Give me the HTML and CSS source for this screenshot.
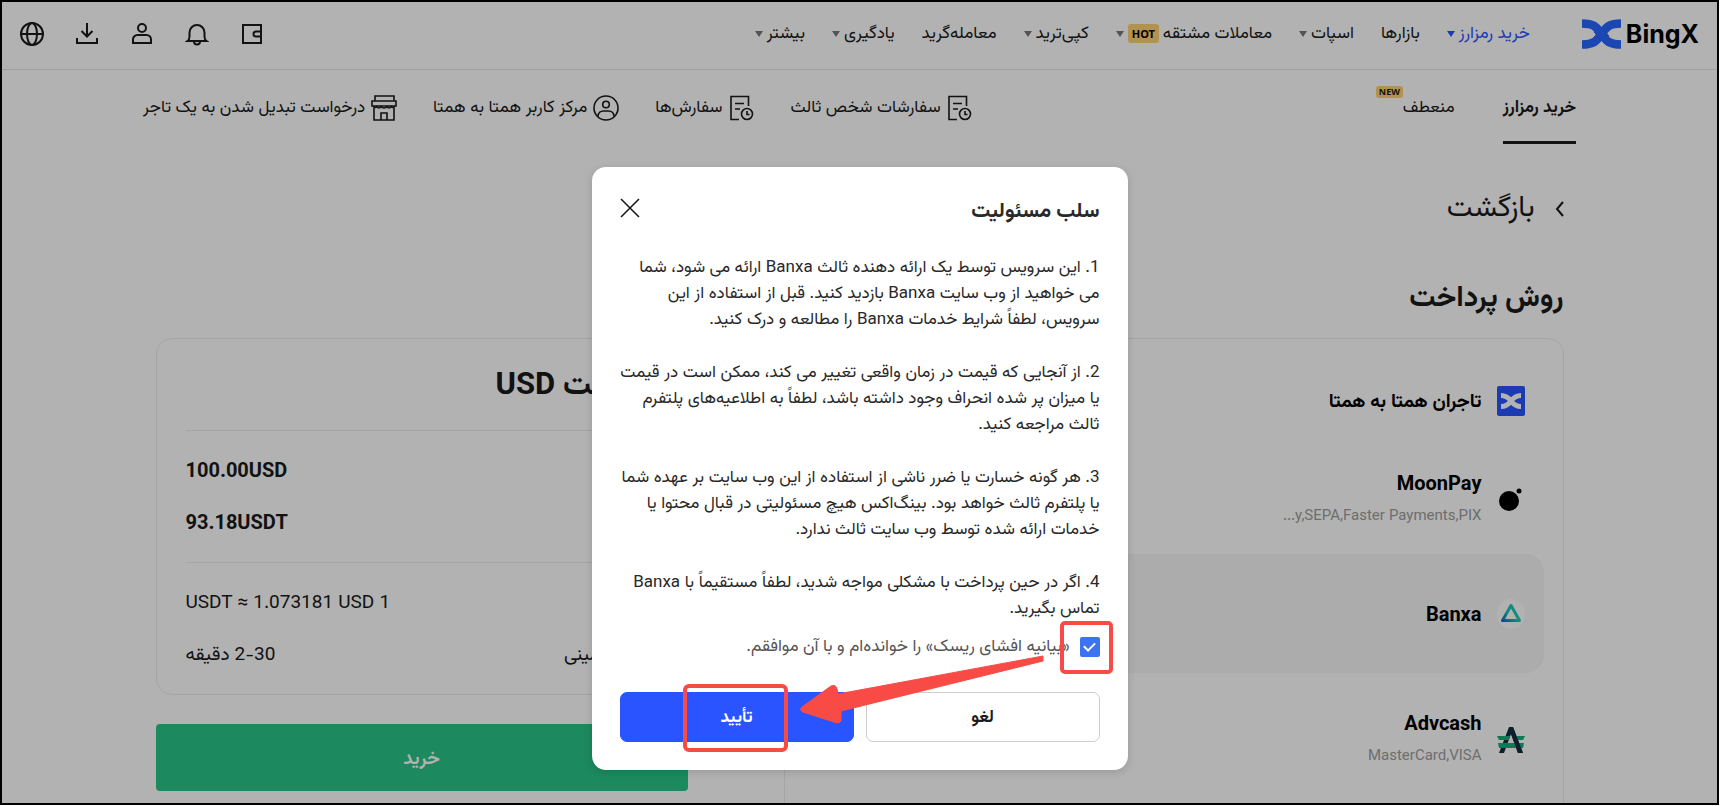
FILE: index.html
```
<!DOCTYPE html>
<html lang="fa" dir="rtl">
<head>
<meta charset="utf-8">
<title>BingX</title>
<link rel="stylesheet" href="styles.css">
</head>
<body>
<div class="frame">

<header class="header">
  <a class="logo" href="#">
    <svg width="39" height="30" viewBox="0 0 39 30">
      <path d="M39 4.500C25 4.500 23.500 10 19.500 15S14 25.500 0 25.500" fill="none" stroke="#2866ff" stroke-width="8.500"/>
      <path d="M15 10l9 10" stroke="#2254d8" stroke-width="9"/>
      <path d="M0 4.500C14 4.500 15.500 10 19.500 15S25 25.500 39 25.500" fill="none" stroke="#2866ff" stroke-width="8.500"/>
    </svg>
    <span class="logo-text">BingX</span>
  </a>
  <nav class="nav">
    <a class="nav-item active" href="#">خرید رمزارز<i class="caret"></i></a>
    <a class="nav-item" href="#">بازارها</a>
    <a class="nav-item" href="#">اسپات<i class="caret"></i></a>
    <a class="nav-item" href="#">معاملات مشتقه<span class="hot">HOT</span><i class="caret"></i></a>
    <a class="nav-item" href="#">کپی‌ترید<i class="caret"></i></a>
    <a class="nav-item" href="#">معامله‌گرید</a>
    <a class="nav-item" href="#">یادگیری<i class="caret"></i></a>
    <a class="nav-item" href="#">بیشتر<i class="caret"></i></a>
  </nav>
  <div class="tools">
    <button class="tool" aria-label="کیف پول"><svg class="icon" viewBox="0 0 24 24"><path d="M3 3h18v18H3zM21 9.500h-5a2.500 2.500 0 0 0 0 5h5"/></svg></button>
    <button class="tool" aria-label="اعلان‌ها"><svg class="icon" viewBox="0 0 24 24"><path d="M2.500 19c1.500-1 2-2.500 2-4.500V10.500a7.500 7.500 0 0 1 15 0V14.500c0 2 .5 3.500 2 4.500zM9 19.500a3 3 0 0 0 6 0"/></svg></button>
    <button class="tool" aria-label="حساب"><svg class="icon" viewBox="0 0 24 24"><circle cx="12" cy="6" r="4"/><path d="M3 21v-3.500a4.500 4.500 0 0 1 4.500-4.500h9a4.500 4.500 0 0 1 4.500 4.500V21z"/></svg></button>
    <button class="tool" aria-label="دانلود"><svg class="icon" viewBox="0 0 24 24"><path d="M12 1v13M6.500 9l5.500 5.500L17.500 9M2 16v5h20v-5"/></svg></button>
    <button class="tool" aria-label="زبان"><svg class="icon" viewBox="0 0 24 24"><circle cx="12" cy="12" r="11"/><ellipse cx="12" cy="12" rx="5" ry="11"/><path d="M1 12h22"/></svg></button>
  </div>
</header>

<div class="subnav">
  <div class="tabs">
    <a class="tab current" href="#">خرید رمزارز</a>
    <a class="tab" href="#">منعطف<span class="new">NEW</span></a>
  </div>
  <div class="links">
    <a class="link" href="#"><svg class="icon thin" viewBox="0 0 26 26"><path d="M19.500 11V1.500H2v23h8M6 8.500h9M6 14h5"/><circle cx="18" cy="19" r="5.500"/><path d="M18 16v3.500h2.500"/></svg>سفارشات شخص ثالث</a>
    <a class="link" href="#"><svg class="icon thin" viewBox="0 0 26 26"><path d="M19.500 11V1.500H2v23h8M6 8.500h9M6 14h5"/><circle cx="18" cy="19" r="5.500"/><path d="M18 16v3.500h2.500"/></svg>سفارش‌ها</a>
    <a class="link" href="#"><svg class="icon thin" viewBox="0 0 26 26"><circle cx="13" cy="13" r="12"/><circle cx="13" cy="9.500" r="3.300"/><path d="M5 21.500c0-3.500 2.500-5.500 5.500-5.500h5c3 0 5.500 2 5.500 5.500"/></svg>مرکز کاربر همتا به همتا</a>
    <a class="link" href="#"><svg class="icon thin" viewBox="0 0 26 26"><path d="M4 6V1h19v5M1 6h24v5H1zM3 13v12h20V13M10 25v-7h6v7"/><path d="M2 11c1 2 3 2 4 .5 1 2 3 2 4 0 1 2 5 2 6 0 1 2 3 2 4 0 1 1.500 3 1.500 4-.5"/></svg>درخواست تبدیل شدن به یک تاجر</a>
  </div>
</div>

<main class="main">
  <a class="back" href="#"><svg class="icon" width="9" height="16" viewBox="0 0 9 16"><path d="M8 1L2 8l6 7"/></svg>بازگشت</a>
  <h1 class="title">روش پرداخت</h1>
  <div class="columns">
    <section class="methods">
      <div class="method merchants">
        <svg width="28" height="30" viewBox="0 0 28 30"><rect width="28" height="30" rx="2" fill="#2954ff"/><path d="M4 9.500c6 0 8 3 10 5.500s4 5.500 10 5.500M24 9.500c-6 0-8 3-10 5.500s-4 5.500-10 5.500" fill="none" stroke="#fff" stroke-width="5"/></svg>
        <div class="method-name">تاجران همتا به همتا</div>
      </div>
      <div class="method">
        <svg width="28" height="30" viewBox="0 0 28 30"><circle cx="12" cy="15" r="10"/><circle cx="22" cy="5" r="2.500"/></svg>
        <div><div class="method-name">MoonPay</div><div class="method-info">y,SEPA,Faster Payments,PIX...</div></div>
      </div>
      <div class="method selected">
        <svg width="28" height="30" viewBox="0 0 28 30">
          <defs><linearGradient id="banxa" x1="0" y1="1" x2="1" y2="0"><stop offset="0" stop-color="#0a6fd0"/><stop offset=".45" stop-color="#19c9bc"/><stop offset="1" stop-color="#19c9a8"/></linearGradient></defs>
          <ellipse cx="14" cy="15" rx="14" ry="15" fill="#fff"/>
          <path d="M14 6.500L22.500 21.500h-17z" fill="none" stroke="url(#banxa)" stroke-width="3" stroke-linejoin="round"/>
        </svg>
        <div class="method-name">Banxa</div>
      </div>
      <div class="method last">
        <svg width="28" height="30" viewBox="0 0 28 30"><path d="M12 1h4l10 26h-5L14 8 7 27H2z" fill="#0f2f40"/><path d="M0 10h13l-1 4H2zM16 10h12l-2 4h-8zM1 17h26l-1 5H2z" fill="#12b07a"/><path d="M14 8l7 19h5L16 1h-3z" fill="#0f2f40"/></svg>
        <div><div class="method-name">Advcash</div><div class="method-info">MasterCard,VISA</div></div>
      </div>
    </section>

    <section class="side">
      <div class="order">
        <h2 class="order-title">پرداخت USD</h2>
        <div class="order-group">
          <div class="order-row"><b>100.00USD</b></div>
          <div class="order-row"><b>93.18USDT</b></div>
        </div>
        <div class="order-group rate">
          <div class="order-row"><span>1 USDT ≈ 1.073181 USD</span></div>
          <div class="order-row"><span>زمان تخمینی</span><span>2-30 دقیقه</span></div>
        </div>
      </div>
      <button class="buy">خرید</button>
    </section>
  </div>
</main>

<div class="overlay">
  <div class="modal" role="dialog" aria-labelledby="modal-title">
    <div class="modal-head">
      <h2 class="modal-title" id="modal-title">سلب مسئولیت</h2>
      <button class="close" aria-label="بستن"><svg class="icon thin" width="20" height="20" viewBox="0 0 20 20"><path d="M1 1l18 18M19 1L1 19"/></svg></button>
    </div>
    <p>1. این سرویس توسط یک ارائه دهنده ثالث Banxa ارائه می شود، شما<br>می خواهید از وب سایت Banxa بازدید کنید. قبل از استفاده از این<br>سرویس، لطفاً شرایط خدمات Banxa را مطالعه و درک کنید.</p>
    <p>2. از آنجایی که قیمت در زمان واقعی تغییر می کند، ممکن است در قیمت<br>یا میزان پر شده انحراف وجود داشته باشد، لطفاً به اطلاعیه‌های پلتفرم<br>ثالث مراجعه کنید.</p>
    <p>3. هر گونه خسارت یا ضرر ناشی از استفاده از این وب سایت بر عهده شما<br>یا پلتفرم ثالث خواهد بود. بینگ‌اکس هیچ مسئولیتی در قبال محتوا یا<br>خدمات ارائه شده توسط وب سایت ثالث ندارد.</p>
    <p>4. اگر در حین پرداخت با مشکلی مواجه شدید، لطفاً مستقیماً با Banxa<br>تماس بگیرید.</p>
    <label class="agree"><input class="check" type="checkbox" checked>«بیانیه افشای ریسک» را خوانده‌ام و با آن موافقم.</label>
    <div class="actions">
      <button class="btn">لغو</button>
      <button class="btn primary">تأیید</button>
    </div>
    <svg class="marks" viewBox="0 0 536 604">
      <rect x="470" y="456" width="49" height="49" rx="3"/>
      <rect x="93" y="519" width="101" height="64" rx="4"/>
      <path class="arrow" d="M451 489v5L249 544v10q-1 2-4 2L211 545q-4-2-1-5l29-21q5-2 6 3l1 5z"/>
    </svg>
  </div>
</div>

</div>
</body>
</html>
```
FILE: styles.css
```
* { box-sizing: border-box; }

body {
  margin: 0;
  background: #fff;
  color: #1a1a1a;
  font-family: Vazirmatn, Roboto, "Noto Sans", sans-serif;
  font-size: 17px;
  line-height: 26px;
}

a { color: inherit; text-decoration: none; }
button { font: inherit; border: 0; padding: 0; background: none; cursor: pointer; }
h1, h2, p { margin: 0; }

.frame {
  position: relative;
  height: calc(100vh - 1px);
  margin-right: 1px;
  border: 2px solid #000;
  overflow: hidden;
}

.icon { fill: none; stroke: #1a1a1a; stroke-width: 2; }
.icon.thin { stroke-width: 1.6; }

/* header */
.header {
  display: flex;
  align-items: center;
  height: 68px;
  padding: 0 18px 4px;
  border-bottom: 1px solid #e4e4e4;
}
.logo {
  display: flex;
  flex-direction: row-reverse;
  align-items: center;
  gap: 5px;
}
.logo-text {
  color: #000;
  font-family: Inter, sans-serif;
  font-size: 25px;
  font-weight: 700;
}
.nav { display: flex; gap: 27px; margin-right: 52px; }
.nav-item { display: flex; align-items: center; white-space: nowrap; }
.nav-item.active { color: #2954ff; }
.caret {
  margin-right: 4px;
  border: 4px solid transparent;
  border-top: 6px solid #777;
  border-bottom: 0;
}
.active .caret { border-top-color: #2954ff; }
.hot {
  margin-right: 4px;
  padding: 0 4px;
  border-radius: 3px;
  background: #ffd272;
  color: #000;
  font-family: "Noto Sans", sans-serif;
  font-size: 11px;
  font-weight: 700;
  line-height: 19px;
}
.tools { display: flex; gap: 31px; margin-right: auto; }
.tool { width: 24px; height: 24px; }
.tool svg { display: block; }

/* second row */
.subnav {
  display: flex;
  justify-content: space-between;
  align-items: center;
  max-width: 1433px;
  height: 76px;
  margin: 0 auto;
}
.tabs, .links { display: flex; }
.tabs { gap: 48px; }
.links { gap: 36px; }
.tab { position: relative; line-height: 76px; }
.current { font-weight: 700; }
.current::after {
  content: "";
  position: absolute;
  left: 0;
  right: 0;
  bottom: 2px;
  height: 3px;
  background: #1a1a1a;
}
.new {
  position: absolute;
  top: 16px;
  left: -27px;
  padding: 0 3px;
  border-radius: 3px;
  background: #ffd272;
  font-family: "Noto Sans", sans-serif;
  font-size: 9px;
  font-weight: 700;
  line-height: 12px;
}
.link { display: flex; align-items: center; gap: 6px; }
.link svg { width: 26px; height: 26px; }

/* content */
.main { max-width: 1408px; margin: 0 auto; }
.back {
  display: flex;
  align-items: center;
  gap: 20px;
  margin-top: 43px;
  font-size: 29px;
  line-height: 40px;
}
.title { margin-top: 50px; font-size: 29px; line-height: 40px; }
.columns {
  display: grid;
  grid-template-columns: 780fr 532fr;
  gap: 96px;
  margin-top: 19px;
}
.methods {
  padding: 16px 19px;
  border: 1px solid #ededed;
  border-radius: 16px;
}
.method {
  display: flex;
  align-items: center;
  gap: 15px;
  height: 107px;
  padding: 0 19px;
  border-radius: 18px;
}
.merchants { height: 92px; }
.selected { height: 119px; background: #f7f7f7; }
.last { height: 136px; }
.method-name { color: #000; font-size: 20px; font-weight: 700; line-height: 30px; }
.merchants .method-name { font-size: 19px; }
.method > .method-name { padding-top: 4px; }
.method-info { padding-top: 2px; color: #9e9e9e; font-size: 15px; line-height: 30px; }

.order {
  padding: 0 29px;
  border: 1px solid #ededed;
  border-radius: 16px;
}
.order-title {
  padding-top: 4px;
  border-bottom: 1px solid #ededed;
  font-size: 31px;
  line-height: 87px;
}
.order-group { padding: 15px 0 12px; font-size: 20px; }
.rate { border-top: 1px solid #ededed; font-size: 19px; }
.order-row { display: flex; line-height: 52px; }
.order-row :last-child { margin-right: auto; }
.buy {
  width: 100%;
  height: 67px;
  margin-top: 29px;
  padding-top: 4px;
  border-radius: 4px;
  background: #2ac588;
  color: #fff;
  font-size: 19px;
  font-weight: 600;
}

/* disclaimer dialog */
.overlay {
  position: absolute;
  inset: 0;
  display: flex;
  justify-content: center;
  align-items: flex-start;
  padding-top: 165px;
  background: rgba(0, 0, 0, .3);
}
.modal {
  position: relative;
  width: 536px;
  padding: 25px 28px 28px;
  border-radius: 14px;
  background: #fff;
  color: #292929;
  box-shadow: 0 2px 8px rgba(0, 0, 0, .15);
}
.modal-head {
  display: flex;
  justify-content: space-between;
  align-items: flex-start;
  margin-bottom: 23px;
}
.modal-title { font-size: 21px; line-height: 40px; }
.close { height: 32px; }
.close svg { display: block; }
.modal p { white-space: nowrap; }
.modal p + p { margin-top: 27px; }
.agree {
  display: flex;
  align-items: center;
  gap: 10px;
  margin-top: 12px;
  color: #555;
}
.check {
  appearance: none;
  width: 20px;
  height: 20px;
  margin: 0;
  border-radius: 2px;
  background: #3b73f0;
  display: grid;
  place-items: center;
}
.check:checked::after {
  content: "";
  width: 5px;
  height: 9px;
  margin-bottom: 3px;
  border: solid #fff;
  border-width: 0 2px 2px 0;
  transform: rotate(45deg);
}
.actions {
  display: grid;
  grid-template-columns: 1fr 1fr;
  gap: 12px;
  margin-top: 32px;
}
.btn {
  height: 50px;
  padding-top: 2px;
  border: 1px solid #ccc;
  border-radius: 7px;
  color: #1a1a1a;
  font-weight: 700;
}
.primary { border-color: #2954ff; background: #2954ff; color: #fff; }
.marks {
  position: absolute;
  inset: 0;
  fill: none;
  stroke: #f84b46;
  stroke-width: 4;
  pointer-events: none;
}
.marks .arrow { fill: #f84b46; stroke-width: 1; }
```
